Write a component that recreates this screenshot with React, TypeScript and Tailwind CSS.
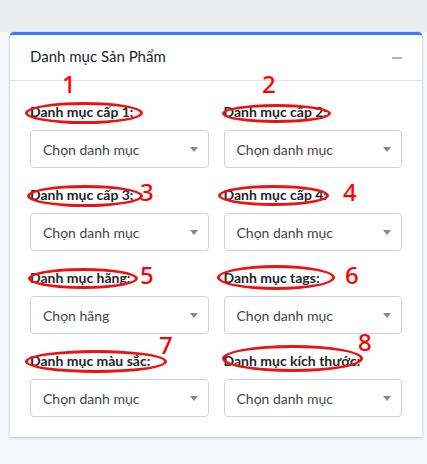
type Field = { label: string; placeholder: string };

const fields: Field[] = [
  { label: "Danh mục cấp 1:", placeholder: "Chọn danh mục" },
  { label: "Danh mục cấp 2:", placeholder: "Chọn danh mục" },
  { label: "Danh mục cấp 3:", placeholder: "Chọn danh mục" },
  { label: "Danh mục cấp 4:", placeholder: "Chọn danh mục" },
  { label: "Danh mục hãng:", placeholder: "Chọn hãng" },
  { label: "Danh mục tags:", placeholder: "Chọn danh mục" },
  { label: "Danh mục màu sắc:", placeholder: "Chọn danh mục" },
  { label: "Danh mục kích thước:", placeholder: "Chọn danh mục" },
];

function SelectBox({ placeholder }: { placeholder: string }) {
  return (
    <div className="flex h-[38px] items-center justify-between rounded border border-[#ced4da] bg-white pl-3 pr-[10px]">
      <span className="text-[14px] text-[#444]">{placeholder}</span>
      {/* select2 caret */}
      <span className="h-0 w-0 border-x-4 border-t-[5px] border-x-transparent border-t-[#888]" />
    </div>
  );
}

export default function App() {
  return (
    <div className="relative h-[464px] w-[427px] overflow-hidden bg-[#f4f6f9] font-['Lato','Noto_Sans',sans-serif] text-[#212529]">
      <div className="h-8 bg-[#ebecf0]" />

      <div className="ml-[10px] w-[412px] rounded-t border-t-[3px] border-[#3a80f6] bg-white shadow-[0_0_1px_rgba(0,0,0,0.125),0_1px_3px_rgba(0,0,0,0.2)]">
        {/* header */}
        <div className="flex h-[46px] items-center justify-between border-b border-[#dee2e6] px-5">
          <h3 className="-mt-[2px] text-[15px] text-[#212529]">Danh mục Sản Phẩm</h3>
          <span className="h-[2px] w-[10px] bg-[#adb5bd]" />
        </div>

        {/* body */}
        <div className="grid grid-cols-2 gap-x-[15px] px-5 pb-1 pt-5">
          {fields.map((f) => (
            <div key={f.label} className="mb-4">
              <label className="mb-2 block h-[21px] text-[14px] font-bold leading-[21px]">{f.label}</label>
              <SelectBox placeholder={f.placeholder} />
            </div>
          ))}
        </div>
      </div>

      {/* red annotations drawn over the screenshot */}
      <div className="pointer-events-none absolute inset-0 font-['Noto_Sans',sans-serif]">
        <div className="absolute left-[25px] top-[102px] h-[22px] w-[118px] rounded-[50%] border-[3px] border-[#ee1111]" />
        <div className="absolute left-[222px] top-[104px] h-[19px] w-[109px] rounded-[50%] border-[3px] border-[#ee1111]" />
        <div className="absolute left-[27px] top-[185px] h-[22px] w-[116px] rounded-[50%] border-[3px] border-[#ee1111]" />
        <div className="absolute left-[218px] top-[185px] h-[21px] w-[111px] rounded-[50%] border-[3px] border-[#ee1111]" />
        <div className="absolute left-[28px] top-[268px] h-[21px] w-[110px] rounded-[50%] border-[3px] border-[#ee1111]" />
        <div className="absolute left-[217px] top-[265px] h-[25px] w-[118px] rounded-[50%] border-[3px] border-[#ee1111]" />
        <div className="absolute left-[25px] top-[350px] h-[23px] w-[142px] rounded-[50%] border-[3px] border-[#ee1111]" />
        <div className="absolute left-[222px] top-[345px] h-[27px] w-[141px] rounded-[50%] border-[3px] border-[#ee1111]" />

        <span className="absolute left-[62px] top-[72px] text-[24px] font-medium leading-none text-[#ff0000]">1</span>
        <span className="absolute left-[262px] top-[72px] text-[24px] font-medium leading-none text-[#ff0000]">2</span>
        <span className="absolute left-[140px] top-[180px] text-[24px] font-medium leading-none text-[#ff0000]">3</span>
        <span className="absolute left-[343px] top-[180px] text-[24px] font-medium leading-none text-[#ff0000]">4</span>
        <span className="absolute left-[140px] top-[263px] text-[24px] font-medium leading-none text-[#ff0000]">5</span>
        <span className="absolute left-[345px] top-[263px] text-[24px] font-medium leading-none text-[#ff0000]">6</span>
        <span className="absolute left-[159px] top-[333px] text-[24px] font-medium leading-none text-[#ff0000]">7</span>
        <span className="absolute left-[358px] top-[330px] text-[24px] font-medium leading-none text-[#ff0000]">8</span>
      </div>
    </div>
  );
}
